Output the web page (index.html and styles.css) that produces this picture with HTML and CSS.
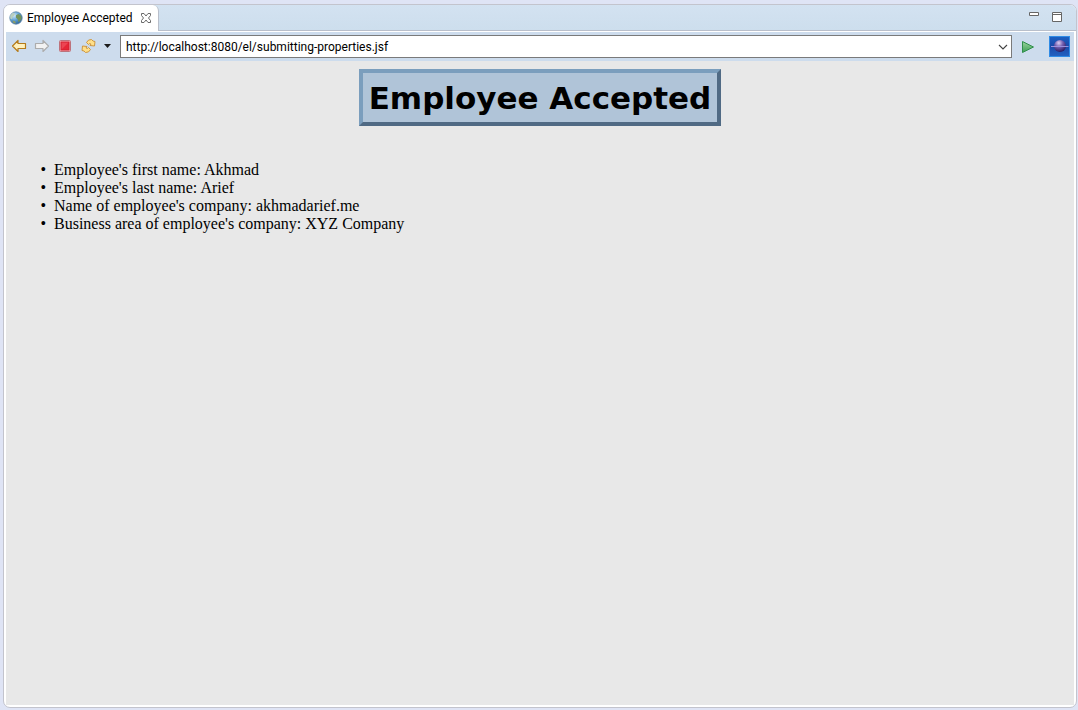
FILE: index.html
```
<!DOCTYPE html>
<html lang="en">
<head>
<meta charset="utf-8">
<title>Employee Accepted</title>
<link rel="stylesheet" href="styles.css">
</head>
<body>
<div class="pane">
  <header class="tabs">
    <div class="tab">
      <svg class="globe" width="14" height="14" viewBox="0 0 14 14" aria-hidden="true">
        <defs><radialGradient id="sea" cx=".35" cy=".3" r=".8"><stop offset="0" stop-color="#d2eafa"/><stop offset=".5" stop-color="#5c9fd2"/><stop offset="1" stop-color="#24568f"/></radialGradient></defs>
        <circle cx="7" cy="7" r="6.2" fill="url(#sea)" stroke="#5f86a8" stroke-width=".8"/>
        <path d="M1.2 4.5 3.5 2 6 2.2 5.4 4.6 3.6 6 3 8.4 1.2 7.5z" fill="#b9cfc0"/>
        <path d="M7 4.2 9.3 3l2.6 1.5.8 2.6-1.4 2.6-1.8 1.6-.8-3-1.8-1.8z" fill="#73935a"/>
        <path d="M3.4 9.5 6 10l1 2.6-2.6-.6z" fill="#8a9b69"/>
      </svg>
      <span class="tab-title">Employee Accepted</span>
      <button class="icon close" aria-label="Close tab">
        <svg width="12" height="12" viewBox="0 0 12 12"><path d="M1.500 1.500H4L6 4l2-2.500h2.500V3.500L8.500 6l2 2.500v2H8L6 8l-2 2.500H1.500v-2L3.500 6l-2-2.500z" fill="#fff" stroke="#6b6b6b"/></svg>
      </button>
    </div>
    <div class="window-buttons">
      <button class="icon" aria-label="Minimize"><svg width="12" height="12" viewBox="0 0 12 12"><path d="M1.500 1.500h9v3h-9z" fill="#fff" stroke="#666"/></svg></button>
      <button class="icon" aria-label="Maximize"><svg width="12" height="12" viewBox="0 0 12 12"><path d="M1.500 1.500h9v9h-9zM1.500 3.500h9" fill="#fff" stroke="#666"/></svg></button>
    </div>
  </header>
  <div class="view">
    <div class="toolbar">
      <div class="nav">
        <button class="icon" aria-label="Back"><svg width="16" height="16" viewBox="0 0 16 16"><path d="M1.500 8 7 2.500v3h7.500v5H7v3z" fill="#fff1bd" stroke="#b57b1a" stroke-width="1.200" stroke-linejoin="round"/></svg></button>
        <button class="icon" aria-label="Forward"><svg width="16" height="16" viewBox="0 0 16 16"><path d="M14.500 8 9 2.500v3H1.500v5H9v3z" fill="#f2f2f2" stroke="#acacac" stroke-width="1.200" stroke-linejoin="round"/></svg></button>
        <button class="icon" aria-label="Stop"><svg width="16" height="16" viewBox="0 0 16 16"><rect x="2.500" y="2.500" width="11" height="11" rx="1" fill="#f4b9bd" stroke="#bd737c"/><rect x="4" y="4" width="8" height="8" fill="#e52736"/><path d="M4 12V4h8z" fill="#ec4552"/><rect x="4" y="4" width="8" height="8" fill="none" stroke="#d21f2e"/></svg></button>
        <button class="icon" aria-label="Refresh"><svg width="16" height="16" viewBox="0 0 16 16" fill="#ffdf88" stroke="#c98f35" stroke-width=".9" stroke-linejoin="round"><path d="M6.500 4.500Q8 1.200 11.500 1.500L13 3l2 .5-.5 4.500-4.500-.5 1-1.500Q9 5 8.500 6.500z"/><path d="M10.500 11.500Q9 14.800 5.500 14.500L4 13l-2-.5.5-4.500 4.500.5-1 1.500Q8 11 8.500 9.500z"/></svg></button>
        <button class="icon" aria-label="Refresh options"><svg width="9" height="16" viewBox="0 0 9 16"><path d="M1 6h7L4.500 10z" fill="#1c1c1c"/></svg></button>
      </div>
      <div class="address">
        <input class="url" type="text" aria-label="Address" value="http://localhost:8080/el/submitting-properties.jsf">
        <button class="icon" aria-label="Address history"><svg width="16" height="16" viewBox="0 0 16 16"><path d="M4 6l4 4 4-4" fill="none" stroke="#444" stroke-width="1.100"/></svg></button>
      </div>
      <button class="icon" aria-label="Go"><svg width="16" height="16" viewBox="0 0 16 16"><defs><linearGradient id="go" x2="0" y2="1"><stop offset="0" stop-color="#9ad49c"/><stop offset="1" stop-color="#3f9f56"/></linearGradient></defs><path d="M2.500 2.500v11l11-5.500z" fill="url(#go)" stroke="#2f8f4b" stroke-linejoin="round"/></svg></button>
      <svg class="brand" width="21" height="21" viewBox="0 0 21 21" aria-hidden="true">
        <defs><linearGradient id="sky" x2="0" y2="1"><stop offset="0" stop-color="#1c60c2"/><stop offset=".5" stop-color="#1a48a8"/><stop offset="1" stop-color="#2262c2"/></linearGradient><radialGradient id="orb" cx=".4" cy=".25" r=".75"><stop offset="0" stop-color="#dccdf2"/><stop offset=".45" stop-color="#7460b0"/><stop offset="1" stop-color="#2a1a60"/></radialGradient></defs>
        <rect x=".5" y=".5" width="20" height="20" fill="url(#sky)" stroke="#2f8be6"/>
        <circle cx="11" cy="10" r="6" fill="url(#orb)"/>
        <path d="M2 10.500h17.500" stroke="#9a90dc"/>
      </svg>
    </div>
    <main class="page">
      <h1 class="title">Employee Accepted</h1>
      <ul class="facts">
        <li>Employee's first name: Akhmad</li>
        <li>Employee's last name: Arief</li>
        <li>Name of employee's company: akhmadarief.me</li>
        <li>Business area of employee's company: XYZ Company</li>
      </ul>
    </main>
  </div>
</div>
</body>
</html>
```
FILE: styles.css
```
* { box-sizing: border-box; }

body {
  margin: 0;
  padding: 4px 1px 2px 3px;
  min-height: 100vh;
  display: flex;
  background: #dfe4f5;
  color: #000;
  font: 12px/16px Roboto, "Open Sans", sans-serif;
}

.pane {
  flex: 1;
  display: flex;
  flex-direction: column;
  border: 1px solid #c3c4cd;
  border-radius: 7px;
  overflow: hidden;
  background: #fff;
}

.tabs {
  display: flex;
  justify-content: space-between;
  height: 26px;
  background: linear-gradient(#d3e2f1, #cddeed);
  border-bottom: 1px solid #b9bfcb;
}

.tab {
  display: flex;
  align-items: center;
  gap: 4px;
  height: 26px;
  padding: 0 6px 0 5px;
  background: #fff;
  border-right: 1px solid #b9bfcb;
  border-radius: 0 6px 0 0;
}

.tab-title { white-space: nowrap; }

.icon {
  display: flex;
  flex: none;
  padding: 0;
  border: 0;
  background: none;
}

.close { margin-left: 3px; }

.window-buttons {
  display: flex;
  align-items: center;
  gap: 11px;
  padding: 0 13px 2px 0;
}

.view {
  flex: 1;
  display: flex;
  flex-direction: column;
  padding: 1px 2px 2px;
}

.toolbar {
  display: flex;
  align-items: center;
  gap: 8px;
  height: 29px;
  padding: 0 4px 0 5px;
  background: #cddced;
}

.nav {
  display: flex;
  gap: 7px;
  padding-bottom: 2px;
}

.address {
  flex: 1;
  display: flex;
  align-items: center;
  height: 23px;
  background: #fff;
  border: 1px solid #7a7a7a;
}

.url {
  flex: 1;
  min-width: 0;
  padding: 0 5px;
  border: 0;
  outline: 0;
  background: none;
  color: inherit;
  font: inherit;
}

.brand {
  flex: none;
  margin-left: 5px;
}

.page {
  flex: 1;
  padding: 8px;
  background: #e8e8e8;
  font: 16px/18px "Liberation Serif", "Times New Roman", serif;
}

.title {
  width: fit-content;
  margin: 0 auto;
  padding: 5px 6px 3px;
  border: 4px solid;
  border-color: #7b9ebd #506a84 #506a84 #7b9ebd;
  background: #b0c4d8;
  font: bold 31px/41px "DejaVu Sans", Verdana, sans-serif;
}

.facts {
  margin: 35px 0 0;
  padding-left: 40px;
  list-style: "•\00a0\00a0";
}
```
